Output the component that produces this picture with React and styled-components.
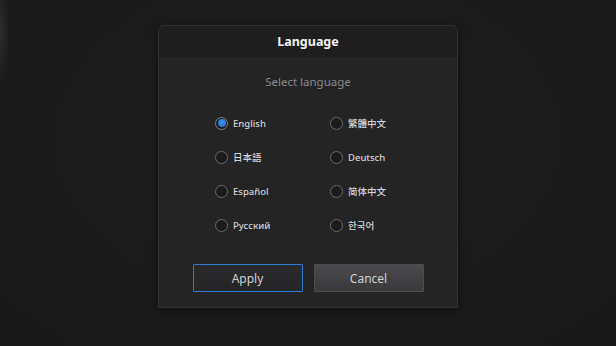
import React, { useState } from "react";
import styled, { createGlobalStyle } from "styled-components";

const Global = createGlobalStyle`
  html, body { margin: 0; padding: 0; background: #1c1c1d; }
  body { font-family: "Noto Sans", "Noto Sans CJK SC", sans-serif; }
`;

const Screen = styled.div`
  width: 616px;
  height: 346px;
  box-sizing: border-box;
  padding-top: 25px;
  display: flex;
  flex-direction: column;
  align-items: center;
  background:
    radial-gradient(ellipse 10px 60px at 0 30px, rgba(80, 80, 82, 0.35), transparent),
    radial-gradient(ellipse at 50% 40%, #1f1f20 0%, #1b1b1c 70%, #19191a 100%);
  overflow: hidden;
`;

const Dialog = styled.div`
  width: 300px;
  height: 283px;
  box-sizing: border-box;
  background: #242425;
  border: 1px solid #313133;
  border-radius: 6px 6px 0 0;
  display: flex;
  flex-direction: column;
  box-shadow: 0 2px 8px rgba(0, 0, 0, 0.5);
`;

const Header = styled.div`
  height: 31px;
  flex: none;
  background: #1e1e1f;
  border-radius: 6px 6px 0 0;
  display: flex;
  align-items: center;
  justify-content: center;
  color: #f2f2f2;
  font-weight: 700;
  font-size: 12.5px;
`;

const Body = styled.div`
  flex: 1;
  display: flex;
  flex-direction: column;
  align-items: stretch;
  padding: 15px 0 0 0;
`;

const Subtitle = styled.div`
  height: 20px;
  line-height: 20px;
  text-align: center;
  color: #8a8a8c;
  font-size: 11.5px;
`;

const Options = styled.div`
  margin-top: 14px;
  padding-left: 56px;
  display: grid;
  grid-template-columns: 115px 115px;
  grid-auto-rows: 34px;
`;

const Option = styled.label`
  display: flex;
  align-items: center;
  gap: 5px;
  cursor: pointer;
  color: #d4d4d6;
  font-size: 9.5px;
  font-weight: 500;
`;

const Radio = styled.span`
  width: 13px;
  height: 13px;
  box-sizing: border-box;
  border-radius: 50%;
  border: 1.5px solid ${(p) => (p.$checked ? "#7b8694" : "#6a6a6e")};
  background: #1b1b1c;
  display: flex;
  align-items: center;
  justify-content: center;
  flex: none;
  &::after {
    content: "";
    width: 8px;
    height: 8px;
    border-radius: 50%;
    background: ${(p) => (p.$checked ? "radial-gradient(circle at 50% 40%, #3d95ec, #1f6fc4)" : "transparent")};
  }
`;

const Buttons = styled.div`
  margin-top: 22px;
  display: flex;
  justify-content: center;
  gap: 11px;
`;

const Button = styled.button`
  width: 110px;
  height: 28px;
  box-sizing: border-box;
  font-family: inherit;
  font-size: 12px;
  color: #cfcfd1;
  border-radius: 1px;
  border: ${(p) => (p.$primary ? "1.5px solid #2d78cc" : "1px solid #4d4d50")};
  background: ${(p) =>
    p.$primary
      ? "linear-gradient(#2a2a2c, #252527)"
      : "linear-gradient(#4a4a4d, #3a3a3d)"};
  cursor: pointer;
`;

const languages = [
  "English",
  "繁體中文",
  "日本語",
  "Deutsch",
  "Español",
  "简体中文",
  "Русский",
  "한국어",
];

export default function App() {
  const [lang, setLang] = useState("English");
  return (
    <>
      <Global />
      <Screen>
        <Dialog>
          <Header>Language</Header>
          <Body>
            <Subtitle>Select language</Subtitle>
            <Options>
              {languages.map((l) => (
                <Option key={l} onClick={() => setLang(l)}>
                  <Radio $checked={lang === l} />
                  {l}
                </Option>
              ))}
            </Options>
            <Buttons>
              <Button $primary>Apply</Button>
              <Button>Cancel</Button>
            </Buttons>
          </Body>
        </Dialog>
      </Screen>
    </>
  );
}
